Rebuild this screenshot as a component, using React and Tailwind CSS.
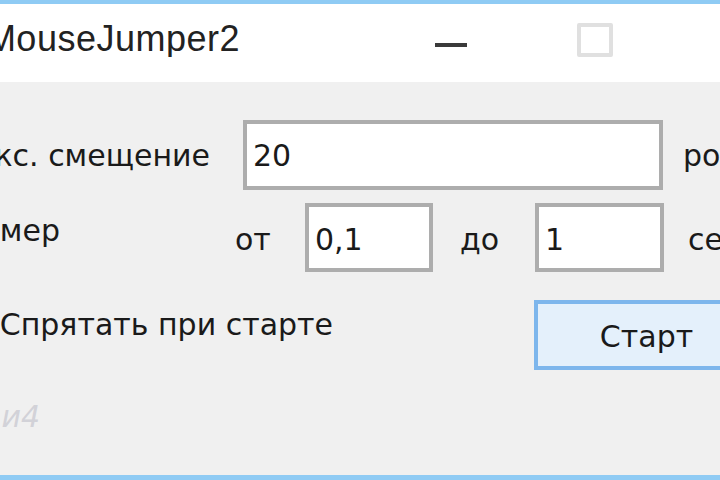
import React from "react";

export default function App() {
  return (
    <div
      className="w-[720px] h-[480px] overflow-hidden flex flex-col bg-[#f0f0f0] text-[#1a1a1a]"
      style={{ fontFamily: '"Liberation Sans", Arial, sans-serif' }}
    >
      <div className="h-[4px] shrink-0 bg-[#8fcbf4]" />

      {/* title bar */}
      <div className="h-[78px] shrink-0 bg-white flex items-start">
        <div className="w-[240px] mt-[17px] flex justify-end overflow-hidden whitespace-nowrap shrink-0">
          <span className="text-[36px] leading-[36px] tracking-[0.5px] text-[#222]">MouseJumper2</span>
        </div>
        <div className="ml-[195px] mt-[39px] w-[32px] h-[4px] bg-[#3a3a3a] shrink-0" />
        <div className="ml-[110px] mt-[19px] w-[36px] h-[34px] border-[4px] border-[#e0e0e0] rounded-[2px] bg-white shrink-0" />
      </div>

      {/* form body */}
      <div className="flex-1 flex flex-col pt-[38px] text-[30px] leading-[33px] font-['DejaVu_Sans',sans-serif]">
        <div className="flex items-start h-[70px] whitespace-nowrap">
          <div className="w-[210px] mt-[19px] flex justify-end overflow-hidden shrink-0">
            <span>Макс. смещение</span>
          </div>
          <div className="ml-[33px] w-[420px] h-[70px] shrink-0 border-[4px] border-[#adadad] bg-white pl-[6px] pt-[15px]">
            20
          </div>
          <div className="ml-[20px] mt-[19px] shrink-0">ро</div>
        </div>

        <div className="mt-[13px] flex items-start h-[69px] whitespace-nowrap">
          <div className="w-[60px] mt-[11px] flex justify-end overflow-hidden shrink-0">
            <span>Таймер</span>
          </div>
          <div className="ml-[175px] w-[70px] mt-[20px] shrink-0">от</div>
          <div className="w-[128px] h-[69px] shrink-0 border-[4px] border-[#adadad] bg-white pl-[6px] pt-[16px]">
            0,1
          </div>
          <div className="w-[102px] pl-[27px] mt-[20px] shrink-0">до</div>
          <div className="w-[129px] h-[69px] shrink-0 border-[4px] border-[#adadad] bg-white pl-[6px] pt-[16px]">
            1
          </div>
          <div className="ml-[24px] mt-[20px] shrink-0">сек</div>
        </div>

        <div className="mt-[28px] flex items-start h-[70px] whitespace-nowrap">
          <div className="w-[333px] mt-[8px] flex justify-end overflow-hidden shrink-0">
            <span>Спрятать при старте</span>
          </div>
          <div className="ml-[201px] w-[225px] h-[70px] shrink-0 border-[4px] border-[#7db6ec] bg-[#e4f0fb] flex items-center justify-center pt-[3px]">
            Старт
          </div>
        </div>

        <div className="mt-[30px] w-[40px] flex justify-end overflow-hidden whitespace-nowrap text-[#d2d2d8] italic">
          <span>и4</span>
        </div>
      </div>

      <div className="h-[5px] shrink-0 bg-[#8fcbf4]" />
    </div>
  );
}
